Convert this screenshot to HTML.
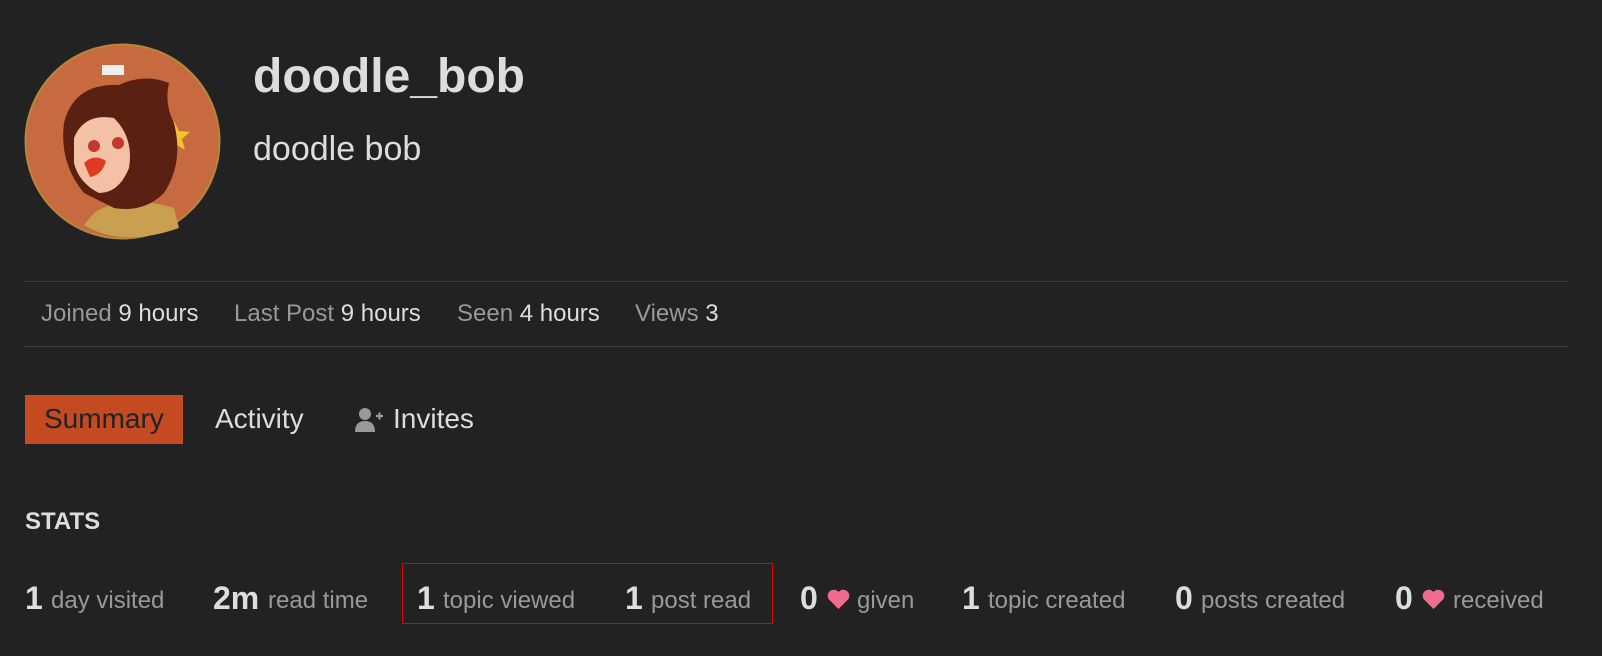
<!DOCTYPE html>
<html><head><meta charset="utf-8"><style>
body{margin:0;width:1602px;height:656px;background:#222;overflow:hidden;font-family:"Liberation Sans",sans-serif;position:relative}
.a{position:absolute;white-space:nowrap}
.n{font-weight:bold;font-size:32px;color:#ddd;top:580px}
.l{font-size:24px;color:#999;top:587px}
.m{font-size:24px;top:300px}
.m .k{color:#999}.m .v{color:#ddd}
.hr{position:absolute;left:24px;width:1544px;height:1px;background:#3a3a3a}
</style></head><body>
<svg class="a" style="left:24px;top:43px" width="197" height="197" viewBox="0 0 197 197">
<circle cx="98.5" cy="98.5" r="97" fill="#c76a3f" stroke="#b8863a" stroke-width="2"/>
<rect x="78" y="22" width="22" height="10" fill="#eee"/>
<path d="M150 78 l5 10 l11 1 l-8 7 l3 11 l-10 -6 l-10 6 l3 -11 l-8 -7 l11 -1z" fill="#f2c12e"/>
<path d="M70 170 Q100 150 150 165 L155 185 Q98 205 60 182z" fill="#c9a050"/>
<path d="M40 80 Q50 40 95 42 Q120 30 145 40 Q140 60 150 80 Q160 120 140 150 Q120 170 90 165 L60 150 Q35 120 40 80z" fill="#5a2012"/>
<path d="M50 95 Q60 70 90 75 Q110 95 105 125 Q95 150 75 150 Q55 140 50 120z" fill="#f3c2a6"/>
<path d="M60 120 Q70 110 82 118 Q78 132 66 134z" fill="#e03a24"/>
<circle cx="70" cy="103" r="6" fill="#c0392b"/><circle cx="94" cy="100" r="6" fill="#c0392b"/>
</svg>
<div class="a" style="left:253px;top:49px;font-size:48px;font-weight:bold;color:#ddd">doodle_bob</div>
<div class="a" style="left:253px;top:130px;font-size:34px;color:#ddd">doodle bob</div>
<div class="hr" style="top:281px"></div>
<div class="a m" style="left:41px"><span class="k">Joined</span> <span class="v">9 hours</span></div>
<div class="a m" style="left:234px"><span class="k">Last Post</span> <span class="v">9 hours</span></div>
<div class="a m" style="left:457px"><span class="k">Seen</span> <span class="v">4 hours</span></div>
<div class="a m" style="left:635px"><span class="k">Views</span> <span class="v">3</span></div>
<div class="hr" style="top:346px"></div>
<div class="a" style="left:25px;top:395px;width:158px;height:49px;background:#c34a21"></div>
<div class="a" style="left:44px;top:403px;font-size:28px;color:#222">Summary</div>
<div class="a" style="left:215px;top:403px;font-size:28px;color:#ddd">Activity</div>
<svg class="a" style="left:355px;top:407px" width="30" height="26" viewBox="0 0 30 26"><circle cx="10" cy="7" r="6" fill="#999"/><path d="M0 25 Q0 14 10 14 Q20 14 20 25z" fill="#999"/><path d="M21 9h7M24.5 5.5v7" stroke="#999" stroke-width="2.2"/></svg>
<div class="a" style="left:393px;top:403px;font-size:28px;color:#ddd">Invites</div>
<div class="a" style="left:25px;top:508px;font-size:24px;font-weight:bold;color:#ddd">STATS</div>
<div class="a" style="left:402px;top:563px;width:369px;height:59px;border:1px solid #d00"></div>
<div class="a n" style="left:25px">1</div><div class="a l" style="left:51px">day visited</div>
<div class="a n" style="left:213px">2m</div><div class="a l" style="left:268px">read time</div>
<div class="a n" style="left:417px">1</div><div class="a l" style="left:443px">topic viewed</div>
<div class="a n" style="left:625px">1</div><div class="a l" style="left:651px">post read</div>
<div class="a n" style="left:800px">0</div>
<svg class="a" style="left:826px;top:587px" width="25" height="24" viewBox="0 0 24 24"><path d="M12 22 L2.5 12.5 A5.5 5.5 0 0 1 12 5 A5.5 5.5 0 0 1 21.5 12.5z" fill="#f06c8c"/></svg>
<div class="a l" style="left:857px">given</div>
<div class="a n" style="left:962px">1</div><div class="a l" style="left:988px">topic created</div>
<div class="a n" style="left:1175px">0</div><div class="a l" style="left:1201px">posts created</div>
<div class="a n" style="left:1395px">0</div>
<svg class="a" style="left:1421px;top:587px" width="25" height="24" viewBox="0 0 24 24"><path d="M12 22 L2.5 12.5 A5.5 5.5 0 0 1 12 5 A5.5 5.5 0 0 1 21.5 12.5z" fill="#f06c8c"/></svg>
<div class="a l" style="left:1453px">received</div>
</body></html>
